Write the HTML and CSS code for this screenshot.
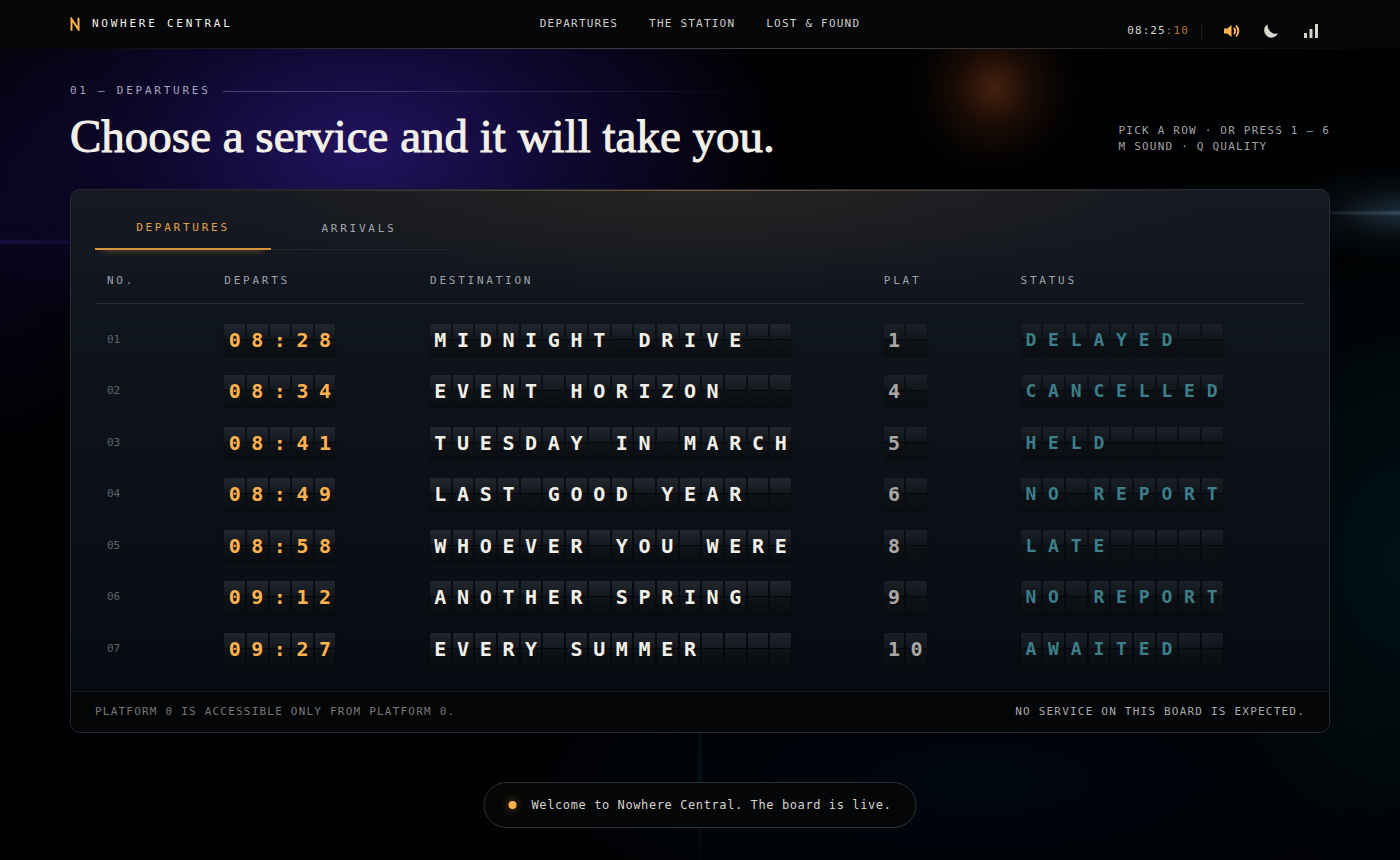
FILE: index.html
```
<!DOCTYPE html>
<html lang="en">
<head>
  <meta charset="UTF-8">
  <meta name="viewport" content="width=device-width, initial-scale=1">
  <title>Nowhere Central</title>
  <link rel="stylesheet" href="styles.css">
</head>
<body>

  <header class="topbar">
    <a class="brand" href="#top">
      <svg class="brand-mark" viewBox="0 0 10 14" aria-hidden="true">
        <path d="M1.500 13.800V2l7 10.500V.800" fill="none" stroke="currentColor" stroke-width="2"/>
      </svg>
      <span>NOWHERE CENTRAL</span>
    </a>
    <nav class="nav">
      <a href="#departures">DEPARTURES</a>
      <a href="#station">THE STATION</a>
      <a href="#lost">LOST &amp; FOUND</a>
    </nav>
    <div class="tools">
      <time class="clock">08:25<span>:10</span></time>
      <button class="tool tool-on" aria-label="Sound">
        <svg viewBox="0 0 18 16">
          <path d="M2 5.500h3.200L9.500 2v12l-4.300-3.500H2z" fill="currentColor"/>
          <path d="M11.800 5a4 4 0 0 1 0 6M14 2.600a7.500 7.500 0 0 1 0 10.800" fill="none" stroke="currentColor" stroke-width="2"/>
        </svg>
      </button>
      <button class="tool" aria-label="Night mode">
        <svg viewBox="0 0 18 16">
          <path d="M5.600 1.200C5.200 6.800 9.500 11.600 16 10.600A7.300 7.300 0 1 1 5.600 1.200z" fill="currentColor"/>
        </svg>
      </button>
      <button class="tool" aria-label="Quality">
        <svg viewBox="0 0 18 16">
          <path d="M2 10h3v5H2zM7.500 6h3v9h-3zM13 1h3v14h-3z" fill="currentColor"/>
        </svg>
      </button>
    </div>
  </header>

  <main class="page" id="departures">
    <div class="intro">
      <div class="intro-text">
        <p class="eyebrow">01 — DEPARTURES</p>
        <h1>Choose a service and it will take you.</h1>
      </div>
      <p class="hint">PICK A ROW · OR PRESS 1 – 6<br>M SOUND · Q QUALITY</p>
    </div>

    <section class="board">
      <div class="board-body">
        <div class="tabs" role="tablist">
          <button class="tab active" role="tab" aria-selected="true">DEPARTURES</button>
          <button class="tab" role="tab" aria-selected="false">ARRIVALS</button>
        </div>
        <table>
          <thead>
            <tr>
              <th class="col-no">NO.</th>
              <th class="col-time">DEPARTS</th>
              <th class="col-dest">DESTINATION</th>
              <th class="col-plat">PLAT</th>
              <th>STATUS</th>
            </tr>
          </thead>
          <tbody id="rows"></tbody>
        </table>
      </div>
      <footer class="board-foot">
        <span>PLATFORM 0 IS ACCESSIBLE ONLY FROM PLATFORM 0.</span>
        <span class="foot-note">NO SERVICE ON THIS BOARD IS EXPECTED.</span>
      </footer>
    </section>
  </main>

  <div class="toast" role="status"><i class="dot"></i>Welcome to Nowhere Central. The board is live.</div>

  <script src="board.js"></script>
</body>
</html>
```
FILE: styles.css
```
* { box-sizing: border-box; }

:root {
  --paper: #f3f0e8;
  --amber: #ffb24d;
  --teal: #3c7e89;
  --mono: "DejaVu Sans Mono", "Liberation Mono", monospace;
  --serif: "Liberation Serif", serif;
}

body {
  margin: 0;
  min-height: 100vh;
  color: var(--paper);
  font-family: var(--mono);
  font-size: 11px;
  line-height: 16px;
  background:
    radial-gradient(circle 95px at 71% 88px, rgba(88, 40, 17, 0.8), rgba(56, 24, 10, 0.45) 40%, rgba(30, 12, 5, 0.15) 75%, transparent),
    radial-gradient(ellipse 420px 250px at 26% 150px, rgba(36, 20, 100, 0.95), rgba(22, 12, 72, 0.7) 45%, transparent),
    radial-gradient(ellipse 110px 3px at 100% 213px, rgba(80, 110, 130, 0.5), transparent),
    radial-gradient(ellipse 130px 50px at 100% 213px, rgba(40, 62, 80, 0.7), rgba(16, 28, 38, 0.4) 50%, transparent),
    radial-gradient(ellipse 140px 3px at 0 242px, rgba(50, 40, 130, 0.5), transparent),
    radial-gradient(ellipse 140px 230px at 0 220px, rgba(10, 6, 40, 0.7), transparent),
    radial-gradient(ellipse 220px 330px at 100% 560px, rgba(0, 24, 30, 0.7), transparent),
    radial-gradient(ellipse 3px 120px at 50% 780px, rgba(0, 40, 44, 0.5), transparent),
    radial-gradient(ellipse 500px 160px at 70% 780px, rgba(0, 8, 20, 0.8), transparent),
    #000102;
}

a { color: inherit; text-decoration: none; }
button { border: 0; padding: 0; background: none; color: inherit; font: inherit; }

/* top bar */
.topbar {
  display: grid;
  grid-template-columns: 1fr auto 1fr;
  align-items: center;
  height: 49px;
  padding: 0 5%;
  background: #040608;
  border-bottom: 1px solid;
  border-image: linear-gradient(90deg, transparent 3%, #3a3a40 35%, #3a3a40 65%, transparent 97%) 1;
}
.brand {
  display: flex;
  align-items: center;
  gap: 12px;
  letter-spacing: 0.25em;
}
.brand-mark { width: 10px; height: 14px; color: var(--amber); }
.nav {
  display: flex;
  gap: 31px;
  letter-spacing: 0.11em;
  color: #cfcdc8;
}
.tools {
  display: flex;
  justify-self: end;
  align-self: end;
  align-items: center;
  gap: 2px;
  height: 34px;
}
.clock {
  padding-right: 12px;
  margin-right: 8px;
  border-right: 1px solid #1c1e22;
  letter-spacing: 0.1em;
  color: #d5d3cc;
}
.clock span { color: #b0773a; }
.tool {
  display: flex;
  justify-content: center;
  align-items: center;
  width: 38px;
  height: 32px;
  color: #d9d6cc;
}
.tool svg { width: 18px; height: 16px; }
.tool-on { color: var(--amber); }

/* intro */
.page { padding: 34px 5% 127px; }
.intro {
  display: flex;
  justify-content: space-between;
  align-items: flex-end;
  margin-bottom: 28px;
}
.intro-text { flex: 0 1 652px; }
.eyebrow {
  display: flex;
  align-items: center;
  gap: 12px;
  margin: 0 0 12px;
  color: #a9a4bd;
  letter-spacing: 0.25em;
  white-space: nowrap;
}
.eyebrow::after {
  content: "";
  flex: 1;
  height: 1px;
  background: linear-gradient(90deg, #4a4373, transparent);
}
h1 {
  margin: 0;
  font-family: var(--serif);
  font-size: 47px;
  font-weight: 400;
  line-height: 50px;
  white-space: nowrap;
  -webkit-text-stroke: 1px var(--paper);
}
.hint {
  margin: 0 0 6px;
  color: #a3a3a3;
  letter-spacing: 0.11em;
  white-space: nowrap;
}

/* board */
.board {
  overflow: hidden;
  border: 1px solid #26292f;
  border-radius: 10px;
  background:
    linear-gradient(90deg, transparent 10%, #745a37 50%, transparent 90%) top / 100% 1px no-repeat,
    radial-gradient(ellipse 40% 100px at 50% 0, rgba(56, 48, 34, 0.45), transparent),
    linear-gradient(#161922, #0f151d 25%, #0b1018 60%, #06090f);
}
.board-body { padding: 18px 24px 17px; }
.tabs {
  display: grid;
  grid-template-columns: 1fr 1fr;
  width: 352px;
}
.tab {
  height: 42px;
  border-bottom: 1px solid #23272f;
  color: #a5a7ad;
  letter-spacing: 0.25em;
}
.tab.active {
  border-bottom: 2px solid #d5953f;
  color: #e3a04a;
  box-shadow: 0 8px 8px -8px rgba(255, 178, 77, 0.4);
}

table {
  width: 100%;
  border-collapse: collapse;
  table-layout: fixed;
}
th, td { padding: 0 12px; text-align: left; }
th {
  height: 53px;
  padding-top: 9px;
  border-bottom: 1px solid #262b33;
  color: #a0a3ab;
  font-weight: 400;
  letter-spacing: 0.25em;
}
.col-no { width: 9.7%; }
.col-time { width: 17%; }
.col-dest { width: 37.5%; }
.col-plat { width: 11.3%; }
td { height: 51px; }
tr:nth-child(even) td { height: 52px; }
tr:first-child td { height: 62px; padding-top: 11px; }
.no { color: #5f646c; }

/* split-flap tiles */
.flaps {
  display: grid;
  grid-auto-flow: column;
  grid-auto-columns: 1fr;
  gap: 2px;
  font-size: 20px;
  font-weight: 700;
  line-height: 32px;
}
.flaps span {
  height: 32px;
  border-radius: 1px;
  text-align: center;
  background: linear-gradient(#22262e, #14181e 15px, #05070a 15px, #05070a 16px, #101419 16px, #090c10);
  box-shadow: 0 1px 2px rgba(0, 0, 0, 0.5);
}
.time { width: 111px; color: var(--amber); }
.dest { width: 361px; }
.plat { width: 43px; color: #a9a8a4; }
.status { width: 202px; font-size: 18px; color: var(--teal); }
.flaps.plat span, .flaps.status span {
  background: linear-gradient(#1b1f26, #11161c 15px, #05080b 15px, #05080b 16px, #0e1217 16px, #0a0d12);
}

.board-foot {
  display: flex;
  justify-content: space-between;
  padding: 12px 24px;
  border-top: 1px solid #15171a;
  background: #040507;
  color: #77787a;
  letter-spacing: 0.11em;
}
.foot-note { color: #aaaaac; }

/* toast */
.toast {
  position: fixed;
  left: 50%;
  bottom: 32px;
  transform: translateX(-50%);
  display: flex;
  align-items: center;
  gap: 15px;
  padding: 14px 24px;
  border: 1px solid #2d3032;
  border-radius: 23px;
  background: #050607;
  color: #d6d4cd;
  font-size: 12px;
  letter-spacing: 0.05em;
  white-space: nowrap;
}
.dot {
  width: 8px;
  height: 8px;
  border-radius: 50%;
  background: var(--amber);
  box-shadow: 0 0 10px rgba(255, 178, 77, 0.5);
}
```
FILE: board.js
```
const services = [
  ['08:28', 'MIDNIGHT DRIVE', '1', 'DELAYED'],
  ['08:34', 'EVENT HORIZON', '4', 'CANCELLED'],
  ['08:41', 'TUESDAY IN MARCH', '5', 'HELD'],
  ['08:49', 'LAST GOOD YEAR', '6', 'NO REPORT'],
  ['08:58', 'WHOEVER YOU WERE', '8', 'LATE'],
  ['09:12', 'ANOTHER SPRING', '9', 'NO REPORT'],
  ['09:27', 'EVERY SUMMER', '10', 'AWAITED']
];

// one tile per character, padded with blanks
function flaps(text, size, name) {
  const tiles = text.padEnd(size).split('').map(c => `<span>${c}</span>`).join('');
  return `<td><div class="flaps ${name}">${tiles}</div></td>`;
}

document.getElementById('rows').innerHTML = services.map((s, i) =>
  `<tr><td class="no">0${i + 1}</td>` +
  flaps(s[0], 5, 'time') +
  flaps(s[1], 16, 'dest') +
  flaps(s[2], 2, 'plat') +
  flaps(s[3], 9, 'status') +
  '</tr>'
).join('');
```
